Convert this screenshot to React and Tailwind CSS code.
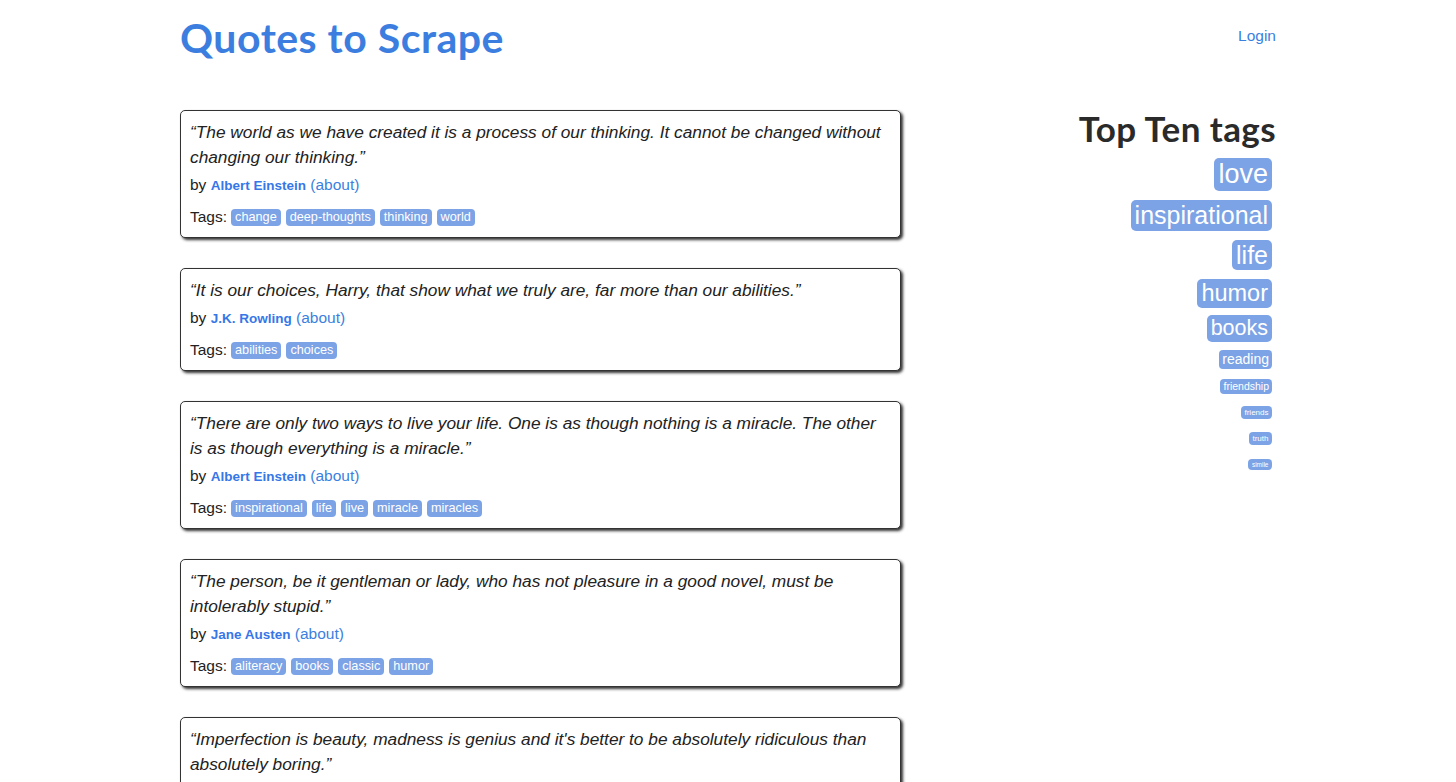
import React from "react";

const quotes = [
  {
    text: "“The world as we have created it is a process of our thinking. It cannot be changed without changing our thinking.”",
    author: "Albert Einstein",
    tags: ["change", "deep-thoughts", "thinking", "world"],
  },
  {
    text: "“It is our choices, Harry, that show what we truly are, far more than our abilities.”",
    author: "J.K. Rowling",
    tags: ["abilities", "choices"],
  },
  {
    text: "“There are only two ways to live your life. One is as though nothing is a miracle. The other is as though everything is a miracle.”",
    author: "Albert Einstein",
    tags: ["inspirational", "life", "live", "miracle", "miracles"],
  },
  {
    text: "“The person, be it gentleman or lady, who has not pleasure in a good novel, must be intolerably stupid.”",
    author: "Jane Austen",
    tags: ["aliteracy", "books", "classic", "humor"],
  },
  {
    text: "“Imperfection is beauty, madness is genius and it's better to be absolutely ridiculous than absolutely boring.”",
    author: "Marilyn Monroe",
    tags: ["be-yourself", "inspirational"],
  },
];

const topTags = [
  { name: "love", cls: "text-[27px] leading-[33px] px-[4px] rounded-[5px]", mb: "mb-[9px]" },
  { name: "inspirational", cls: "text-[25px] leading-[31px] px-[4px] rounded-[5px]", mb: "mb-[9px]" },
  { name: "life", cls: "text-[25px] leading-[30px] px-[4px] rounded-[5px]", mb: "mb-[9px]" },
  { name: "humor", cls: "text-[23.5px] leading-[29px] px-[4px] rounded-[5px]", mb: "mb-[7px]" },
  { name: "books", cls: "text-[21.5px] leading-[27px] px-[4px] rounded-[5px]", mb: "mb-[8px]" },
  { name: "reading", cls: "text-[14px] leading-[19px] px-[3px] rounded-[4px]", mb: "mb-[10px]" },
  { name: "friendship", cls: "text-[10.5px] leading-[15px] px-[3px] rounded-[4px]", mb: "mb-[12px]" },
  { name: "friends", cls: "text-[8px] leading-[13px] px-[3.5px] rounded-[4px]", mb: "mb-[13px]" },
  { name: "truth", cls: "text-[8px] leading-[13px] px-[3.5px] rounded-[4px]", mb: "mb-[14px]" },
  { name: "simile", cls: "text-[6.5px] leading-[11px] px-[3.5px] rounded-[4px]", mb: "" },
];

function Quote({ q }) {
  return (
    <div className="border border-[#333] rounded-[5px] shadow-[2px_2px_3px_#333] pl-[9px] pr-[10px] pt-[9px] pb-[8px] bg-white">
      <div className="italic text-[17.3px] leading-[25px] text-[#222]">{q.text}</div>
      <div className="mt-[3px] leading-[24px] text-[15.5px] text-[#222]">
        by <span className="font-bold text-[13.5px] text-[#3677e8]">{q.author}</span>{" "}
        <span className="text-[#3b7fe0]">(about)</span>
      </div>
      <div className="mt-[7px] leading-[24px] flex items-center text-[15.5px] text-[#222]">
        <span className="mr-[4px]">Tags:</span>
        <div className="flex gap-[5px]">
          {q.tags.map((t) => (
            <span
              key={t}
              className="bg-[#7ca3e6] text-white text-[12.7px] leading-[17px] px-[4px] rounded-[4px]"
            >
              {t}
            </span>
          ))}
        </div>
      </div>
    </div>
  );
}

export default function App() {
  return (
    <div className="bg-white min-h-[782px] font-['Liberation_Sans',Arial,sans-serif]">
      <div className="w-[1096px] mx-auto">
        <header className="flex justify-between items-start h-[110px]">
          <h1 className="mt-[12px] font-['Lato',sans-serif] font-bold text-[41px] leading-[52px] text-[#3b7ee0] tracking-[0.5px]">
            Quotes to Scrape
          </h1>
          <a className="mt-[25px] text-[15.5px] leading-[22px] text-[#3b7fe0]">Login</a>
        </header>
        <main className="flex justify-between items-start">
          <div className="w-[721px] flex flex-col gap-[30px]">
            {quotes.map((q, i) => (
              <Quote key={i} q={q} />
            ))}
          </div>
          <div className="flex flex-col items-end">
            <h2 className="font-['Lato',sans-serif] font-bold text-[35px] leading-[36px] tracking-[0.4px] text-[#2a2a2a] mb-[12px]">
              Top Ten tags
            </h2>
            <div className="flex flex-col items-end pr-[4px]">
              {topTags.map((t) => (
                <span key={t.name} className={`bg-[#7ca3e6] text-white ${t.cls} ${t.mb}`}>
                  {t.name}
                </span>
              ))}
            </div>
          </div>
        </main>
      </div>
    </div>
  );
}
